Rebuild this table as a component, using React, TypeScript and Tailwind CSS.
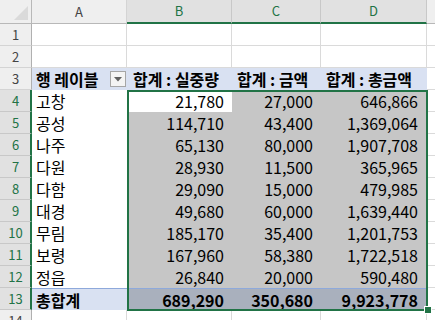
import React from "react";

const GREEN = "#217346";

type Row = {
  n: number;
  a?: string;
  b?: string;
  c?: string;
  d?: string;
  kind: "blank" | "head" | "data" | "total";
};

const rows: Row[] = [
  { n: 1, kind: "blank" },
  { n: 2, kind: "blank" },
  { n: 3, kind: "head", a: "행 레이블", b: "합계 : 실중량", c: "합계 : 금액", d: "합계 : 총금액" },
  { n: 4, kind: "data", a: "고창", b: "21,780", c: "27,000", d: "646,866" },
  { n: 5, kind: "data", a: "공성", b: "114,710", c: "43,400", d: "1,369,064" },
  { n: 6, kind: "data", a: "나주", b: "65,130", c: "80,000", d: "1,907,708" },
  { n: 7, kind: "data", a: "다원", b: "28,930", c: "11,500", d: "365,965" },
  { n: 8, kind: "data", a: "다함", b: "29,090", c: "15,000", d: "479,985" },
  { n: 9, kind: "data", a: "대경", b: "49,680", c: "60,000", d: "1,639,440" },
  { n: 10, kind: "data", a: "무림", b: "185,170", c: "35,400", d: "1,201,753" },
  { n: 11, kind: "data", a: "보령", b: "167,960", c: "58,380", d: "1,722,518" },
  { n: 12, kind: "data", a: "정읍", b: "26,840", c: "20,000", d: "590,480" },
  { n: 13, kind: "total", a: "총합계", b: "689,290", c: "350,680", d: "9,923,778" },
  { n: 14, kind: "blank" },
];

function RowHeader({ n }: { n: number }) {
  const sel = n >= 4 && n <= 13;
  return sel ? (
    <div className="w-[32px] h-full shrink-0 flex items-center justify-center bg-[#e1e1e1] border-b border-[#c8c8c8] border-r-2 border-r-[#217346] text-[13px] text-[#217346] pl-[1px]">
      {n}
    </div>
  ) : (
    <div className="w-[32px] h-full shrink-0 flex items-center justify-center bg-[#efefef] border-b border-[#d4d4d4] border-r border-r-[#b0b0b0] text-[13px] text-[#444444]">
      {n}
    </div>
  );
}

function DataRow({ r }: { r: Row }) {
  if (r.kind === "blank") {
    return (
      <div className="flex h-[22px]">
        <RowHeader n={r.n} />
        <div className="w-[95px] shrink-0 border-r border-b border-[#dadada]" />
        <div className="w-[105px] shrink-0 border-r border-b border-[#dadada]" />
        <div className="w-[89px] shrink-0 border-r border-b border-[#dadada]" />
        <div className="w-[106px] shrink-0 border-r border-b border-[#dadada]" />
        <div className="flex-1 border-b border-[#dadada]" />
      </div>
    );
  }
  if (r.kind === "head") {
    return (
      <div className="flex h-[22px]">
        <RowHeader n={r.n} />
        <div className="w-[95px] shrink-0 bg-[#d9e1f2] flex items-center justify-between pl-[4px] pr-[1px] font-bold">
          <span className="leading-none">{r.a}</span>
          <div className="w-[16px] h-[16px] bg-[#f4f4f4] border border-[#a6a6a6] flex items-center justify-center">
            <svg width="8" height="5" viewBox="0 0 8 5">
              <path d="M0 0 L8 0 L4 4.5 Z" fill="#606060" />
            </svg>
          </div>
        </div>
        <div className="w-[105px] shrink-0 bg-[#d9e1f2] flex items-center pl-[6px] font-bold whitespace-nowrap">
          <span className="leading-none">{r.b}</span>
        </div>
        <div className="w-[89px] shrink-0 bg-[#d9e1f2] flex items-center pl-[5px] font-bold whitespace-nowrap">
          <span className="leading-none">{r.c}</span>
        </div>
        <div className="w-[106px] shrink-0 bg-[#d9e1f2] flex items-center pl-[5px] font-bold whitespace-nowrap">
          <span className="leading-none">{r.d}</span>
        </div>
        <div className="flex-1 border-b border-[#dadada]" />
      </div>
    );
  }
  if (r.kind === "total") {
    return (
      <div className="flex h-[22px]">
        <RowHeader n={r.n} />
        <div className="w-[95px] shrink-0 bg-[#d9e1f2] border-t border-[#8ea9db] flex items-center pl-[4px] font-bold">
          <span className="leading-none">{r.a}</span>
        </div>
        <div className="w-[105px] shrink-0 bg-[#a9b0bd] border-t border-[#8ea9db] flex items-center justify-end pr-[8px] font-bold">
          <span className="leading-none">{r.b}</span>
        </div>
        <div className="w-[89px] shrink-0 bg-[#a9b0bd] border-t border-[#8ea9db] flex items-center justify-end pr-[8px] font-bold">
          <span className="leading-none">{r.c}</span>
        </div>
        <div className="w-[106px] shrink-0 bg-[#a9b0bd] border-t border-[#8ea9db] flex items-center justify-end pr-[9px] font-bold">
          <span className="leading-none">{r.d}</span>
        </div>
        <div className="flex-1 border-b border-[#dadada]" />
      </div>
    );
  }
  const active = r.n === 4;
  return (
    <div className="flex h-[22px]">
      <RowHeader n={r.n} />
      <div className="w-[95px] shrink-0 bg-white flex items-center pl-[4px]">
        <span className="leading-none">{r.a}</span>
      </div>
      <div
        className={
          active
            ? "w-[105px] shrink-0 bg-white flex items-center justify-end pr-[8px]"
            : "w-[105px] shrink-0 bg-[#c6c6c6] flex items-center justify-end pr-[8px]"
        }
      >
        <span className="leading-none">{r.b}</span>
      </div>
      <div className="w-[89px] shrink-0 bg-[#c6c6c6] flex items-center justify-end pr-[8px]">
        <span className="leading-none">{r.c}</span>
      </div>
      <div className="w-[106px] shrink-0 bg-[#c6c6c6] flex items-center justify-end pr-[9px]">
        <span className="leading-none">{r.d}</span>
      </div>
      <div className="flex-1 border-b border-[#dadada]" />
    </div>
  );
}

export default function App() {
  return (
    <div
      className="relative w-[435px] h-[320px] overflow-hidden bg-white text-[16px] text-black"
      style={{ fontFamily: '"Noto Sans CJK KR", "Noto Sans", sans-serif' }}
    >
      {/* column headers */}
      <div className="flex h-[24px] text-[13px]">
        <div className="relative w-[32px] shrink-0 bg-[#efefef] border-r border-b border-[#b8b8b8]">
          <svg className="absolute right-[3px] bottom-[3px]" width="14" height="14" viewBox="0 0 14 14">
            <path d="M14 0 L14 14 L0 14 Z" fill="#dadada" />
          </svg>
        </div>
        <div className="w-[95px] shrink-0 bg-[#efefef] border-r border-[#d4d4d4] border-b border-b-[#b8b8b8] flex items-center justify-center text-[#444444]">
          A
        </div>
        <div className="w-[105px] shrink-0 bg-[#e1e1e1] border-r border-[#c8c8c8] border-b-2 border-b-[#217346] flex items-center justify-center text-[#217346]">
          B
        </div>
        <div className="w-[89px] shrink-0 bg-[#e1e1e1] border-r border-[#c8c8c8] border-b-2 border-b-[#217346] flex items-center justify-center text-[#217346]">
          C
        </div>
        <div className="w-[106px] shrink-0 bg-[#e1e1e1] border-r border-[#c8c8c8] border-b-2 border-b-[#217346] flex items-center justify-center text-[#217346]">
          D
        </div>
        <div className="flex-1 bg-[#efefef] border-b border-[#b8b8b8]" />
      </div>
      {rows.map((r) => (
        <DataRow key={r.n} r={r} />
      ))}
      {/* selection border */}
      <div
        className="absolute left-[127px] top-[90px] w-[301px] h-[221px] border-2 pointer-events-none"
        style={{ borderColor: GREEN }}
      />
      <div className="absolute left-[424px] top-[306px] w-[8px] h-[8px] bg-[#217346] border border-white" />
    </div>
  );
}
